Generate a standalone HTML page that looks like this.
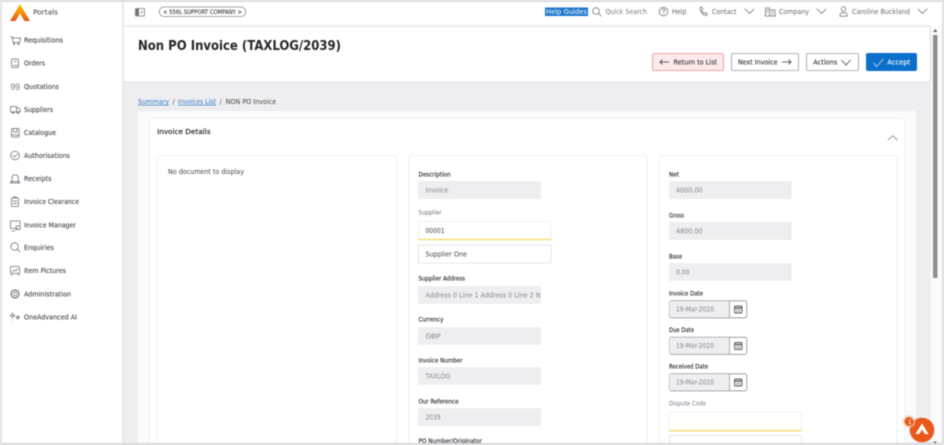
<!DOCTYPE html>
<html lang="en"><head><meta charset="utf-8"><title>Non PO Invoice</title>
<style>
html,body{margin:0;padding:0;width:944px;height:445px;overflow:hidden;background:#fff}
svg{display:block;filter:blur(.42px)}
text{font-family:"DejaVu Sans","Liberation Sans",sans-serif;fill:#3a3a40;font-size:6.8px}
.n text{fill:#40404a;stroke:#40404a;stroke-width:.08}
.l{font-size:6px;fill:#2c2c33;stroke:#2c2c33;stroke-width:.14}
.g{fill:#85858f!important}
.ic{fill:none;stroke:#6b6b78;stroke-width:.75;stroke-linecap:round;stroke-linejoin:round}
</style></head><body>
<svg width="944" height="445" viewBox="0 0 944 445" xmlns="http://www.w3.org/2000/svg">
<defs><linearGradient id="lg" x1="0" y1="0" x2="0" y2="1"><stop offset="0" stop-color="#f7c600"/><stop offset=".55" stop-color="#f58a0a"/><stop offset="1" stop-color="#e8501a"/></linearGradient>
<clipPath id="cp"><rect x="419" y="286" width="121" height="18"/></clipPath></defs>
<rect width="944" height="445" fill="#dcdcde"/>
<rect x="2" y="2" width="120" height="441" fill="#fff"/>
<rect x="122" y="2" width="2" height="441" fill="#e9e9ec"/>
<rect x="124" y="2" width="806" height="23" fill="#fff"/>
<rect x="124" y="27" width="806" height="55" fill="#fff"/>
<rect x="124" y="25" width="806" height="2" fill="#ececef"/>
<rect x="124" y="82" width="807" height="361" fill="#eeeef1"/>
<rect x="124" y="81.500" width="807" height="1" fill="#e0e0e4"/>
<rect x="931" y="2" width="11" height="441" fill="#fbfbfb"/>
<rect x="930" y="2" width="12" height="24" fill="#fff"/>
<rect x="933" y="35" width="4.500" height="243" fill="#8f8f8f"/>
<path d="M935.200 29l2.200 3h-4.400z" fill="#666"/>

<!-- logo -->
<path d="M20 4L30 21 24.500 21 20 13.500 15.500 21 10 21z" fill="url(#lg)"/>
<text x="33" y="14.500" textLength="25" lengthAdjust="spacingAndGlyphs" style="font-size:7.400px">Portals</text>

<!-- nav -->
<g class="n">
<text x="24" y="42.300" textLength="39" lengthAdjust="spacingAndGlyphs">Requisitions</text>
<text x="24" y="65.300" textLength="21" lengthAdjust="spacingAndGlyphs">Orders</text>
<text x="24" y="88.800" textLength="35" lengthAdjust="spacingAndGlyphs">Quotations</text>
<text x="24" y="111.800" textLength="29" lengthAdjust="spacingAndGlyphs">Suppliers</text>
<text x="24" y="134.800" textLength="32" lengthAdjust="spacingAndGlyphs">Catalogue</text>
<text x="24" y="157.800" textLength="46" lengthAdjust="spacingAndGlyphs">Authorisations</text>
<text x="24" y="180.800" textLength="27.500" lengthAdjust="spacingAndGlyphs">Receipts</text>
<text x="24" y="203.800" textLength="55" lengthAdjust="spacingAndGlyphs">Invoice Clearance</text>
<text x="24" y="227.300" textLength="52" lengthAdjust="spacingAndGlyphs">Invoice Manager</text>
<text x="24" y="249.800" textLength="30" lengthAdjust="spacingAndGlyphs">Enquiries</text>
<text x="24" y="272.800" textLength="42" lengthAdjust="spacingAndGlyphs">Item Pictures</text>
<text x="24" y="296.300" textLength="47" lengthAdjust="spacingAndGlyphs">Administration</text>
<text x="24" y="319.300" textLength="53" lengthAdjust="spacingAndGlyphs">OneAdvanced AI</text>
</g>
<g class="ic">
<path d="M10.500 36.500h1.500l1.300 6h6.200l1.200-4.500h-8"/><circle cx="14" cy="44" r=".6"/><circle cx="18.500" cy="44" r=".6"/>
<rect x="11.500" y="59" width="7" height="8.500" rx=".8"/><path d="M13 65.500h5M14 61.500h2.500"/>
<text x="10.500" y="90" style="font-size:9.500px;fill:#77777f;stroke:none;font-family:'Liberation Sans',sans-serif" textLength="9.500" lengthAdjust="spacingAndGlyphs">99</text>
<path d="M10.500 106.500h6v5.500h-6zM16.500 108h2.500l1.200 1.700v2.300h-3.700"/><circle cx="13" cy="112.500" r=".9"/><circle cx="18" cy="112.500" r=".9"/>
<rect x="11.500" y="128.500" width="7.500" height="8.500" rx=".8"/><path d="M13.500 128.500v3.500h3.500v-3.500M11.500 135h7.500"/>
<circle cx="15" cy="155.500" r="4.300"/><path d="M13 155.500l1.500 1.500 2.700-2.800"/>
<path d="M12 183v-6.500l1.300-1.500h3.600l1.300 1.500v6.500M10.500 181.500h9v1.500h-9z"/>
<rect x="11.500" y="198" width="7" height="8.500" rx=".8"/><path d="M13.500 198v-1h3v1M13 201h4M13 203.500h4"/>
<path d="M17.500 228.500h-7v-7.500h9.500v4M12 231h3"/><rect x="16" y="226" width="4" height="3.500"/>
<circle cx="14.500" cy="246.500" r="3.700"/><path d="M17.200 249.200l2.600 2.600"/>
<rect x="10.500" y="266.500" width="9" height="7" rx=".6"/><path d="M12.500 272l2-2 1.300 1 2-2.500M12 273.500l-.8 2M18 273.500l.8 2"/>
<circle cx="15" cy="294" r="1.700"/><circle cx="15" cy="294" r="3.900" stroke-dasharray="1.800 .8" stroke-width="1.200"/>
<path d="M12.500 313l.7 1.800 1.800.7-1.800.7-.7 1.800-.7-1.800-1.800-.7 1.800-.7zM17.800 315.500l.6 1.300 1.300.6-1.300.6-.6 1.300-.6-1.300-1.300-.6 1.300-.6zM12.500 320v.1"/>
</g>

<!-- topbar -->
<rect x="135.500" y="8.500" width="9" height="7.500" rx=".8" fill="none" stroke="#777" stroke-width=".8"/><rect x="135.500" y="8.500" width="3.500" height="7.500" fill="#777"/><path d="M142.500 10.800l-1.500 1.500 1.500 1.500" fill="none" stroke="#777" stroke-width=".7"/>
<rect x="159.300" y="7" width="86.500" height="9.500" rx="4.700" fill="#fff" stroke="#8a8a92" stroke-width=".8"/>
<text x="163" y="13.900" textLength="79" lengthAdjust="spacingAndGlyphs" style="font-size:5.800px;fill:#333;stroke:#333;stroke-width:.1">&lt; 556L SUPPORT COMPANY &gt;</text>
<rect x="545" y="7.500" width="43" height="8.500" fill="#1a75cc"/>
<text x="546" y="14" textLength="41" lengthAdjust="spacingAndGlyphs" style="font-size:6.600px;fill:#fff">Help Guides</text>
<text x="605.500" y="14" textLength="41.500" lengthAdjust="spacingAndGlyphs" style="font-size:6.600px;fill:#777">Quick Search</text>
<text x="672" y="14" textLength="14.500" lengthAdjust="spacingAndGlyphs" style="font-size:6.600px;fill:#666">Help</text>
<text x="712" y="14" textLength="24.500" lengthAdjust="spacingAndGlyphs" style="font-size:6.600px;fill:#666">Contact</text>
<text x="779" y="14" textLength="30" lengthAdjust="spacingAndGlyphs" style="font-size:6.600px;fill:#666">Company</text>
<text x="852" y="14" textLength="58" lengthAdjust="spacingAndGlyphs" style="font-size:6.600px;fill:#666">Caroline Buckland</text>
<g class="ic">
<circle cx="596" cy="11" r="3.300"/><path d="M598.500 13.500l2.500 2.500"/>
<circle cx="663.500" cy="11.500" r="4.300"/><path d="M662.200 10.200c.2-1.600 2.700-1.600 2.700 0 0 1.100-1.400 1.100-1.400 2.200M663.500 14v.1"/>
<path d="M700 7.500l1.800-.5 1 2.500-1 .9c.4 1.400 1.300 2.500 2.700 3.200l1-.9 1.800 1.500-.8 1.300c-3.600.3-6.500-4-6.500-7.500z"/>
<path d="M765.500 16v-8h4v8zM769.500 10h5.500v6h-5.500M767 10h1M767 12h1M771.500 12h1.500M771.500 14h1.500M765 16h10.500"/>
<circle cx="843.500" cy="9" r="2.300"/><path d="M840 16.200h7v-1.500c0-1.500-2-2-3.500-2s-3.500.5-3.500 2z"/>
<path d="M745 9l4.500 4.500L754 9M817 9l4.500 4.500L826 9M918 9l4.500 4.500L927 9"/>
</g>

<!-- title -->
<text x="138" y="49.800" textLength="203" lengthAdjust="spacingAndGlyphs" style="font-size:13.200px;font-weight:bold;fill:#26262b">Non PO Invoice (TAXLOG/2039)</text>

<!-- buttons -->
<rect x="652.500" y="53.500" width="71" height="17" rx="1.500" fill="#fde9ea" stroke="#ea8b93" stroke-width=".8"/>
<path d="M669 62h-9.500M662.500 59.500L660 62l2.500 2.500" fill="none" stroke="#333" stroke-width=".8"/>
<text x="673.500" y="64.300" textLength="43.500" lengthAdjust="spacingAndGlyphs" style="font-size:6.600px;fill:#333;stroke:#333;stroke-width:.1">Return to List</text>
<rect x="731.500" y="53.500" width="67" height="17" rx="1.500" fill="#fff" stroke="#9a9aa6" stroke-width=".8"/>
<text x="738" y="64.300" textLength="39.500" lengthAdjust="spacingAndGlyphs" style="font-size:6.600px;fill:#333;stroke:#333;stroke-width:.1">Next Invoice</text>
<path d="M782 62h9M788.500 59.500L791 62l-2.500 2.500" fill="none" stroke="#333" stroke-width=".8"/>
<rect x="806.500" y="53.500" width="52" height="17" rx="1.500" fill="#fff" stroke="#9a9aa6" stroke-width=".8"/>
<text x="813.300" y="64.300" textLength="24" lengthAdjust="spacingAndGlyphs" style="font-size:6.600px;fill:#333;stroke:#333;stroke-width:.1">Actions</text>
<path d="M841.500 60l4.500 5 4.500-5" fill="none" stroke="#444" stroke-width=".8"/>
<rect x="866" y="53" width="51" height="18" rx="2" fill="#0b6fcb"/>
<path d="M873.500 63l3 3.500 7-7.500" fill="none" stroke="#cfe3f6" stroke-width=".8"/>
<text x="887.300" y="64.300" textLength="23" lengthAdjust="spacingAndGlyphs" style="font-size:6.600px;fill:#fff;stroke:#fff;stroke-width:.1">Accept</text>

<!-- breadcrumb -->
<text x="138" y="103.800" textLength="31" lengthAdjust="spacingAndGlyphs" style="font-size:6.600px;fill:#2f78c0;text-decoration:underline">Summary</text>
<text x="172.500" y="103.800" style="font-size:6.600px;fill:#555">/</text>
<text x="178" y="103.800" textLength="38" lengthAdjust="spacingAndGlyphs" style="font-size:6.600px;fill:#2f78c0;text-decoration:underline">Invoices List</text>
<text x="219.500" y="103.800" style="font-size:6.600px;fill:#555">/</text>
<text x="225.700" y="103.800" textLength="50.500" lengthAdjust="spacingAndGlyphs" style="font-size:6.600px;fill:#444">NON PO Invoice</text>

<!-- cards -->
<rect x="138" y="111" width="778" height="340" rx="2" fill="#fbfbfc"/>
<rect x="149.500" y="118.500" width="755.500" height="330" rx="2" fill="#fff" stroke="#f0f0f3"/>
<text x="157" y="134" textLength="53.500" lengthAdjust="spacingAndGlyphs" style="font-size:7.200px;fill:#33333a;stroke:#33333a;stroke-width:.22">Invoice Details</text>
<path d="M888 140l4.700-4.300 4.700 4.300" fill="none" stroke="#8f8f98" stroke-width=".9"/>
<rect x="157.500" y="155.500" width="239" height="300" rx="2" fill="#fff" stroke="#f0f0f3"/>
<rect x="408.500" y="155.500" width="239" height="300" rx="2" fill="#fff" stroke="#f0f0f3"/>
<rect x="659" y="155.500" width="238" height="300" rx="2" fill="#fff" stroke="#f0f0f3"/>
<text x="168" y="174" textLength="76" lengthAdjust="spacingAndGlyphs" style="font-size:6.600px;fill:#444">No document to display</text>

<!-- col2 -->
<text class="l" x="418.500" y="176.300" textLength="32" lengthAdjust="spacingAndGlyphs">Description</text>
<rect x="418" y="181" width="123" height="18" fill="#eeeef0"/>
<text class="g" x="425.500" y="192.300" textLength="23" lengthAdjust="spacingAndGlyphs">Invoice</text>
<text x="418.500" y="214.700" textLength="23" lengthAdjust="spacingAndGlyphs" style="font-size:6px;fill:#6e6e7a">Supplier</text>
<rect x="418.500" y="221.500" width="132.500" height="18" fill="#fff" stroke="#f0f0f2"/>
<rect x="418" y="238.800" width="133.500" height="1.300" fill="#f5dc62"/>
<text x="425.500" y="232.800" textLength="19" lengthAdjust="spacingAndGlyphs" style="font-size:6.600px;fill:#444">00001</text>
<rect x="418.500" y="245" width="132.500" height="18" fill="#fff" stroke="#e6e6ea"/>
<text x="425.500" y="256.300" textLength="41.500" lengthAdjust="spacingAndGlyphs" style="font-size:6.600px;fill:#444">Supplier One</text>
<text class="l" x="418.500" y="280.700" textLength="46.500" lengthAdjust="spacingAndGlyphs">Supplier Address</text>
<rect x="418" y="286" width="123" height="18" fill="#eeeef0"/>
<g clip-path="url(#cp)"><text class="g" x="425.500" y="297.300" textLength="115" lengthAdjust="spacingAndGlyphs">Address 0 Line 1 Address 0 Line 2 N</text></g>
<text class="l" x="418.500" y="321.300" textLength="25" lengthAdjust="spacingAndGlyphs">Currency</text>
<rect x="418" y="327" width="123" height="18" fill="#eeeef0"/>
<text class="g" x="425.500" y="338.300" textLength="15" lengthAdjust="spacingAndGlyphs">GBP</text>
<text class="l" x="418.500" y="362.300" textLength="44" lengthAdjust="spacingAndGlyphs">Invoice Number</text>
<rect x="418" y="367" width="123" height="18" fill="#eeeef0"/>
<text class="g" x="425.500" y="378.300" textLength="25" lengthAdjust="spacingAndGlyphs">TAXLOG</text>
<text class="l" x="418.500" y="403.300" textLength="40" lengthAdjust="spacingAndGlyphs">Our Reference</text>
<rect x="418" y="408" width="123" height="18" fill="#eeeef0"/>
<text class="g" x="425.500" y="419.300" textLength="15" lengthAdjust="spacingAndGlyphs">2039</text>
<text class="l" x="418.500" y="443" textLength="63.500" lengthAdjust="spacingAndGlyphs">PO Number/Originator</text>

<!-- col3 -->
<text class="l" x="669" y="176.300" textLength="10" lengthAdjust="spacingAndGlyphs">Net</text>
<rect x="669" y="181" width="122.500" height="18" fill="#eeeef0"/>
<text class="g" x="676" y="192.300" textLength="26.500" lengthAdjust="spacingAndGlyphs">4000.00</text>
<text class="l" x="669" y="217.300" textLength="15" lengthAdjust="spacingAndGlyphs">Gross</text>
<rect x="669" y="222" width="122.500" height="18" fill="#eeeef0"/>
<text class="g" x="676" y="233.300" textLength="26.500" lengthAdjust="spacingAndGlyphs">4800.00</text>
<text class="l" x="669" y="258.300" textLength="13" lengthAdjust="spacingAndGlyphs">Base</text>
<rect x="669" y="263" width="122.500" height="18" fill="#eeeef0"/>
<text class="g" x="676" y="274.300" textLength="13.500" lengthAdjust="spacingAndGlyphs">0.00</text>

<text class="l" x="669" y="295.300" textLength="34" lengthAdjust="spacingAndGlyphs">Invoice Date</text>
<text class="l" x="669" y="331.800" textLength="25" lengthAdjust="spacingAndGlyphs">Due Date</text>
<text class="l" x="669" y="368.300" textLength="39" lengthAdjust="spacingAndGlyphs">Received Date</text>
<g>
<rect x="669.300" y="300.800" width="77.500" height="17" rx="2" fill="#fff" stroke="#8f8f98" stroke-width=".8"/><path d="M671 301h58v16.500h-58a1.700 1.700 0 0 1-1.700-1.700v-13a1.700 1.700 0 0 1 1.700-1.800z" fill="#eeeef0"/><path d="M729.500 301v16.600" stroke="#8f8f98" stroke-width=".7"/>
<rect x="669.300" y="337.300" width="77.500" height="17" rx="2" fill="#fff" stroke="#8f8f98" stroke-width=".8"/><path d="M671 337.500h58V354h-58a1.700 1.700 0 0 1-1.700-1.700v-13a1.700 1.700 0 0 1 1.700-1.800z" fill="#eeeef0"/><path d="M729.500 337.500v16.600" stroke="#8f8f98" stroke-width=".7"/>
<rect x="669.300" y="373.800" width="77.500" height="17" rx="2" fill="#fff" stroke="#8f8f98" stroke-width=".8"/><path d="M671 374h58v16.500h-58a1.700 1.700 0 0 1-1.700-1.700v-13a1.700 1.700 0 0 1 1.700-1.800z" fill="#eeeef0"/><path d="M729.500 374v16.600" stroke="#8f8f98" stroke-width=".7"/>
</g>
<text class="g" x="676" y="311.300" textLength="38" lengthAdjust="spacingAndGlyphs">19-Mar-2020</text>
<text class="g" x="676" y="347.800" textLength="38" lengthAdjust="spacingAndGlyphs">19-Mar-2020</text>
<text class="g" x="676" y="384.300" textLength="38" lengthAdjust="spacingAndGlyphs">19-Mar-2020</text>
<g fill="none" stroke="#555" stroke-width=".9">
<rect x="734.500" y="306" width="7.500" height="7" rx="1"/><path d="M734.500 308h7.500" stroke-width="1.400"/><path d="M736.500 309.500v2.500M738.300 309.500v2.500M740 309.500v2.500" stroke-width=".6"/>
<rect x="734.500" y="342.500" width="7.500" height="7" rx="1"/><path d="M734.500 344.500h7.500" stroke-width="1.400"/><path d="M736.500 346v2.500M738.300 346v2.500M740 346v2.500" stroke-width=".6"/>
<rect x="734.500" y="379" width="7.500" height="7" rx="1"/><path d="M734.500 381h7.500" stroke-width="1.400"/><path d="M736.500 382.500v2.500M738.300 382.500v2.500M740 382.500v2.500" stroke-width=".6"/>
</g>
<text x="669" y="405.300" textLength="37" lengthAdjust="spacingAndGlyphs" style="font-size:6px;fill:#777785">Dispute Code</text>
<rect x="669.500" y="412" width="132" height="19" fill="#fffffc" stroke="#f0f0f2"/>
<rect x="669" y="430" width="132.500" height="1.300" fill="#f5dc62"/>
<rect x="669.500" y="435.500" width="132" height="12" fill="#fff" stroke="#e8e8ec"/>

<!-- bottom/right frame -->
<rect x="0" y="443" width="944" height="2" fill="#d8d8da"/>
<rect x="942" y="0" width="2" height="445" fill="#dcdcde"/>
<rect x="0" y="0" width="944" height="2" fill="#dcdcde"/>
<rect x="0" y="0" width="2" height="445" fill="#e2e2e4"/>
<path d="M933 441.500h4l-2 2z" fill="#666"/>

<!-- chat badge -->
<circle cx="922" cy="430" r="12.300" fill="#e9591a"/>
<circle cx="909" cy="421.500" r="6.500" fill="#f6c9b0" opacity=".55"/>
<circle cx="909" cy="421.500" r="4.500" fill="#e9591a"/>
<text x="907.800" y="424" style="font-size:6.500px;fill:#fff">1</text>
<path d="M922 423.500l6.500 10.500h-3.700L922 429.500 919.200 434h-3.700z" fill="#fff"/>
</svg>
</body></html>
